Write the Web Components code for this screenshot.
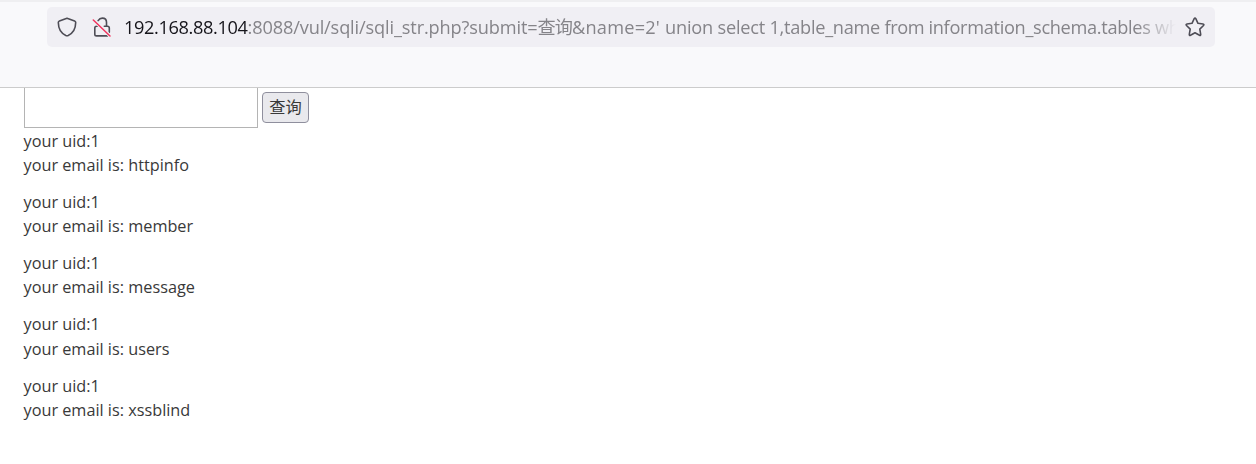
<!DOCTYPE html>
<html lang="zh-CN">
<head>
<meta charset="utf-8">
<title>sqli_str</title>
<style>
html,body{margin:0;height:100%;overflow:hidden;background:#fff}
body{font-family:"Open Sans","Noto Sans CJK SC",sans-serif}
</style>
</head>
<body>
<browser-window>
  <address-bar slot="chrome">
    <url-part w="123.5" host>192.168.88.104</url-part>
    <url-part w="290">:8088/vul/sqli/sqli_str.php?submit=</url-part>
    <url-part w="34.5">查询</url-part>
    <url-part w="93">&amp;name=2' </url-part>
    <url-part w="52.5">union </url-part>
    <url-part w="52">select </url-part>
    <url-part w="115">1,table_name </url-part>
    <url-part w="44">from </url-part>
    <url-part w="226.5">information_schema.tables </url-part>
    <url-part w="52">where</url-part>
  </address-bar>
  <query-form>查询</query-form>
  <user-record uid="1">httpinfo</user-record>
  <user-record uid="1">member</user-record>
  <user-record uid="1">message</user-record>
  <user-record uid="1">users</user-record>
  <user-record uid="1">xssblind</user-record>
</browser-window>
<script>
const define = (name, html, init) => customElements.define(name, class extends HTMLElement {
  constructor() {
    super();
    this.attachShadow({mode: 'open'}).innerHTML = html;
  }
  connectedCallback() { if (init) init(this); }
});

define('browser-window', `
<style>
:host{display:flex;flex-direction:column;width:1256px;height:464px;overflow:hidden}
header{box-sizing:border-box;flex:none;height:88px;background:#f9f9fb;border-top:2px solid #efeff1;border-bottom:1px solid #ccc;padding:5px 41px 0 47px}
main{padding-left:24px}
</style>
<header><slot name="chrome"></slot></header>
<main><slot></slot></main>`);

define('address-bar', `
<style>
:host{display:flex;box-sizing:border-box;height:40px;border-radius:5px;background:#f0eff4;align-items:center;padding:0 10px}
svg{display:block;flex:none;width:20px;height:20px;fill:none;stroke:#4e4d56;stroke-width:1.6;stroke-linejoin:round;stroke-linecap:round}
.lock{margin-left:15px;width:20px}
.url{display:flex;flex:none;width:1052px;margin-left:12px;overflow:hidden;height:30px;line-height:30px;font-size:18.2px;color:#858489;
 -webkit-mask-image:linear-gradient(to right,#000 1012px,transparent 1052px);mask-image:linear-gradient(to right,#000 1012px,transparent 1052px)}
.star{margin-left:9px}
</style>
<svg viewBox="0 0 20 20"><path d="M10 1.2 17.6 4q1.1.4 1.1 1.6c-.1 6.4-3 10.9-7.5 12.9q-1.2.5-2.4 0C4.300 16.500 1.400 12 1.300 5.600q0-1.200 1.100-1.600Z"/></svg>
<svg class="lock" viewBox="0 0 20 20"><path d="M6.100 3.600C7.200 1.900 8.500 1.100 10.300 1.100c2.500 0 4.200 1.800 4.200 4.200v4M5.900 9.300H4.500Q2.800 9.300 2.800 11v6.200q0 1.700 1.700 1.700h11M12.300 9.300h3.200q1.800 0 1.800 1.700v4.200M5.900 7v2.300"/><path d="M1.300 3 18 19" stroke="#f0f0f4" stroke-width="3.200"/><path d="M1.300 3 18 19" stroke="#f2345f" stroke-width="1.500"/></svg>
<div class="url"><slot></slot></div>
<svg class="star" viewBox="0 0 20 20"><path d="M9.200 1.700q.8-1.400 1.600 0l2.200 4.600 5 .7q1.500.3.500 1.500l-3.700 3.600.9 5.200q.1 1.500-1.200.9L10 15.800l-4.500 2.400q-1.300.6-1.200-.9l.9-5.200L1.500 8.500Q.5 7.300 2 7l5-.7Z"/></svg>`);

define('url-part', `
<style>
:host{display:block;flex:none}
:host([host]){color:#15141a}
span{white-space:pre}
</style><span><slot></slot></span>`, el => {
  const span = el.shadowRoot.querySelector('span');
  const width = +el.getAttribute('w');
  el.style.width = width + 'px';
  const natural = span.getBoundingClientRect().width;
  span.style.letterSpacing = (width - natural) / el.textContent.length + 'px';
});

define('query-form', `
<style>
:host{display:flex;height:40.55px;gap:4px}
input{box-sizing:border-box;width:234px;height:40px;margin:0;padding:0 6px;border:1px solid #b4b4b4;border-top:0;border-radius:0;background:#fff;outline:0;font:16.25px "Open Sans",sans-serif}
button{box-sizing:border-box;width:47px;height:31px;margin:4px 0 0;padding:0 0 2px;border:1px solid #8f8f9d;border-radius:4px;background:#e9e9ed;color:#393939;font:16.25px/27px "Noto Sans CJK SC",sans-serif}
</style>
<input type="text"><button type="button"><slot></slot></button>`);

define('user-record', `
<style>
:host{display:block;margin:0 0 12.5px;font-size:16.25px;line-height:24.375px;color:#393939}
p{margin:0 0 0 -.5px}
</style>
<p>your uid:<span></span><br>your email is: <slot></slot></p>`, el => {
  el.shadowRoot.querySelector('span').textContent = el.getAttribute('uid');
});
</script>
</body>
</html>
